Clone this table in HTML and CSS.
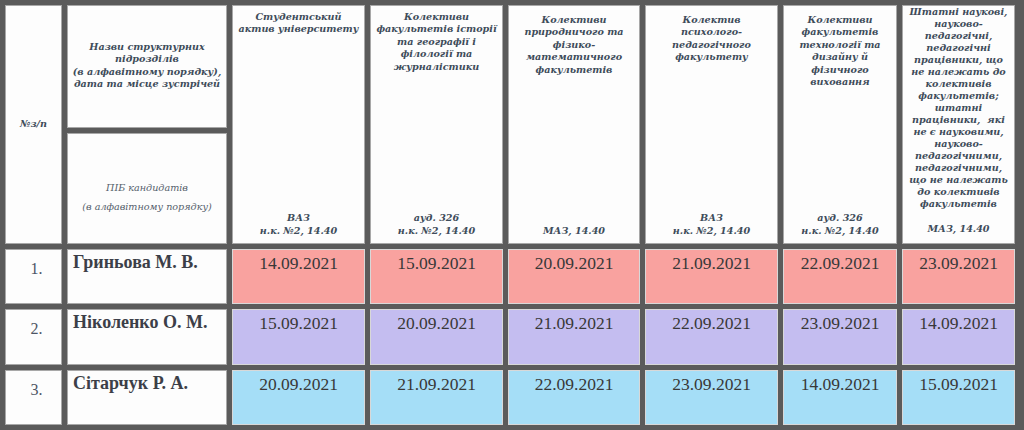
FILE: index.html
```html
<!DOCTYPE html>
<html lang="uk">
<head>
<meta charset="utf-8">
<title>Графік зустрічей</title>
<link rel="stylesheet" href="styles.css">
</head>
<body>
<div class="sheet">
  <div class="cell hd num-hd"><span>№з/п</span></div>
  <div class="cell hd units"><p>Назви структурних<br>підрозділів<br>(в алфавітному порядку),<br>дата та місце зустрічей</p></div>
  <div class="cell hd col c3"><p>Студентський<br>актив університету</p><p>ВАЗ<br>н.к. №2, 14.40</p></div>
  <div class="cell hd col c4"><p>Колективи<br>факультетів історії<br>та географії і<br>філології та<br>журналістики</p><p>ауд. 326<br>н.к. №2, 14.40</p></div>
  <div class="cell hd col c5 low"><p>Колективи<br>природничого та<br>фізико-<br>математичного<br>факультетів</p><p>МАЗ, 14.40</p></div>
  <div class="cell hd col c6 low"><p>Колектив<br>психолого-<br>педагогічного<br>факультету</p><p>ВАЗ<br>н.к. №2, 14.40</p></div>
  <div class="cell hd col c7 low"><p>Колективи<br>факультетів<br>технології та<br>дизайну й<br>фізичного<br>виховання</p><p>ауд. 326<br>н.к. №2, 14.40</p></div>
  <div class="cell hd col c8"><p>Штатні наукові,<br>науково-<br>педагогічні,<br>педагогічні<br>працівники, що<br>не належать до<br>колективів<br>факультетів;<br>штатні<br>працівники,&nbsp; які<br>не є науковими,<br>науково-<br>педагогічними,<br>педагогічними,<br>що не належать<br>до колективів<br>факультетів</p><p>МАЗ, 14.40</p></div>
  <div class="cell hd pib"><p>ПІБ кандидатів</p><p>(в алфавітному порядку)</p></div>

  <div class="cell idx">1.</div>
  <div class="cell name">Гриньова М. В.</div>
  <div class="cell date pink">14.09.2021</div>
  <div class="cell date pink">15.09.2021</div>
  <div class="cell date pink">20.09.2021</div>
  <div class="cell date pink">21.09.2021</div>
  <div class="cell date pink">22.09.2021</div>
  <div class="cell date pink">23.09.2021</div>

  <div class="cell idx">2.</div>
  <div class="cell name">Ніколенко О. М.</div>
  <div class="cell date lilac">15.09.2021</div>
  <div class="cell date lilac">20.09.2021</div>
  <div class="cell date lilac">21.09.2021</div>
  <div class="cell date lilac">22.09.2021</div>
  <div class="cell date lilac">23.09.2021</div>
  <div class="cell date lilac">14.09.2021</div>

  <div class="cell idx">3.</div>
  <div class="cell name">Сітарчук Р. А.</div>
  <div class="cell date sky">20.09.2021</div>
  <div class="cell date sky">21.09.2021</div>
  <div class="cell date sky">22.09.2021</div>
  <div class="cell date sky">23.09.2021</div>
  <div class="cell date sky">14.09.2021</div>
  <div class="cell date sky">15.09.2021</div>
</div>
</body>
</html>
```
FILE: styles.css
```css
html, body {
  margin: 0;
  padding: 0;
  background: #5b5b5b;
}
.sheet {
  width: 1024px;
  height: 430px;
  box-sizing: border-box;
  padding: 5px 9px 5px 5px;
  background: #5b5b5b;
  display: grid;
  grid-template-columns: 57px 160px 133px 133px 132px 133px 114px 113px;
  grid-template-rows: 123px 111px 55px 56px 55px;
  gap: 5px;
}
.cell {
  box-sizing: border-box;
  background: #fdfdfd;
  border: 1px solid #a8a8a8;
  overflow: hidden;
}
.hd {
  font-family: "DejaVu Serif", "Liberation Serif", serif;
  font-weight: bold;
  font-style: italic;
  font-size: 9.6px;
  line-height: 12.4px;
  color: #3e4c5a;
  text-align: center;
}
.hd p { margin: 0; white-space: nowrap; }
.num-hd {
  grid-row: 1 / 3;
  grid-column: 1;
  display: flex;
  align-items: center;
  justify-content: center;
}
.units {
  grid-row: 1;
  grid-column: 2;
  display: flex;
  align-items: center;
  justify-content: center;
  padding-bottom: 2px;
}
.pib {
  grid-row: 2;
  grid-column: 2;
  display: flex;
  flex-direction: column;
  align-items: center;
  justify-content: center;
  font-weight: normal;
  color: #55616c;
  padding-top: 18px;
  gap: 6px;
}
.col {
  grid-row: 1 / 3;
  display: flex;
  flex-direction: column;
  justify-content: space-between;
  padding: 5px 0 6px;
}
.col.low { padding-top: 8px; }
.c8 { padding-top: 0; padding-bottom: 8px; line-height: 12px; }
.idx {
  font-family: "Liberation Serif", serif;
  font-size: 16px;
  color: #4d5565;
  text-align: center;
  padding-top: 10px;
  padding-left: 6px;
}
.name {
  font-family: "Liberation Serif", serif;
  font-weight: bold;
  font-size: 18px;
  color: #3c3f48;
  padding: 2px 0 0 5px;
  line-height: 20px;
}
.date {
  font-family: "Liberation Serif", serif;
  font-size: 17.5px;
  line-height: 20px;
  color: #383838;
  text-align: center;
  padding-top: 3px;
  border-color: #d8d8d8;
}
.pink { background: #f9a29f; }
.lilac { background: #c4bdf0; }
.sky { background: #a5def7; }
```
